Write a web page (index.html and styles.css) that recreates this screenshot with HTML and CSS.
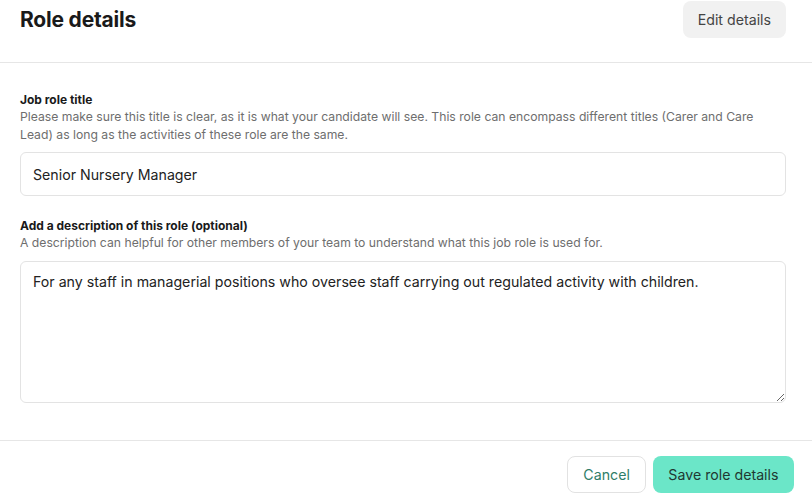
FILE: index.html
```html
<!DOCTYPE html>
<html lang="en">
<head>
    <meta charset="UTF-8">
    <meta name="viewport" content="width=device-width, initial-scale=1.0">
    <title>Role details</title>
    <link rel="stylesheet" href="styles.css">
</head>

<body>
    <div class="cabecalho">
        <h1 class="titulo">Role details</h1>
        <button class="botaoEditar">Edit details</button>
    </div>

    <form class="formulario" action="">
        <div class="grupo">
            <label class="rotulo">Job role title</label>
            <p class="ajuda">Please make sure this title is clear, as it is what your candidate will see. This role can encompass different titles (Carer and Care Lead) as long as the activities of these role are the same.</p>
            <input class="campo" type="text" value="Senior Nursery Manager">
        </div>

        <div class="grupo">
            <label class="rotulo">Add a description of this role (optional)</label>
            <p class="ajuda">A description can helpful for other members of your team to understand what this job role is used for.</p>
            <textarea class="campo areaTexto">For any staff in managerial positions who oversee staff carrying out regulated activity with children.</textarea>
        </div>
    </form>

    <div class="rodape">
        <button class="botaoCancelar">Cancel</button>
        <button class="botaoSalvar">Save role details</button>
    </div>
</body>

</html>
```

FILE: styles.css
```css
body {
    margin: 0;
    background-color: #ffffff;
    color: #1c1c1c;
    font-family: Inter, "Noto Sans", sans-serif;
}

button {
    font-family: inherit;
    cursor: pointer;
}

.cabecalho {
    display: flex;
    justify-content: space-between;
    align-items: center;
    padding: 1px 26px 24px 20px;
    border-bottom: 1px solid #e6e6e6;
}

.titulo {
    margin: 0;
    font-size: 21px;
    font-weight: 700;
    letter-spacing: -0.2px;
    color: #1a1a1a;
}

.botaoEditar {
    height: 37px;
    padding: 0 15px;
    border: none;
    border-radius: 8px;
    background-color: #f1f1f1;
    color: #444444;
    font-size: 14.2px;
}

.formulario {
    padding: 29px 26px 0 20px;
    height: 378px;
    box-sizing: border-box;
    border-bottom: 1px solid #e6e6e6;
}

.grupo {
    display: flex;
    flex-direction: column;
    margin-bottom: 22px;
}

.rotulo {
    font-size: 12px;
    line-height: 16px;
    font-weight: 700;
    color: #1a1a1a;
}

.ajuda {
    margin: 0 0 8px;
    font-size: 12.2px;
    line-height: 18px;
    color: #6e6e6e;
}

.campo {
    height: 44px;
    box-sizing: border-box;
    padding: 0 12px;
    border: 1px solid #e3e3e3;
    border-radius: 6px;
    font-family: inherit;
    font-size: 14.2px;
    color: #222222;
    outline: none;
}

.areaTexto {
    height: 142px;
    margin-top: 1px;
    padding: 10px 12px;
    line-height: 20px;
    resize: vertical;
}

.rodape {
    display: flex;
    justify-content: flex-end;
    gap: 7px;
    padding: 15px 18px 0 20px;
}

.botaoCancelar {
    height: 37px;
    padding: 0 15px;
    border: 1px solid #e2e2e2;
    border-radius: 8px;
    background-color: #ffffff;
    color: #2f7d68;
    font-size: 14.2px;
}

.botaoSalvar {
    height: 37px;
    padding: 0 15.5px;
    border: none;
    border-radius: 8px;
    background-color: #6be6c8;
    color: #1f3832;
    font-size: 14.2px;
}
```
